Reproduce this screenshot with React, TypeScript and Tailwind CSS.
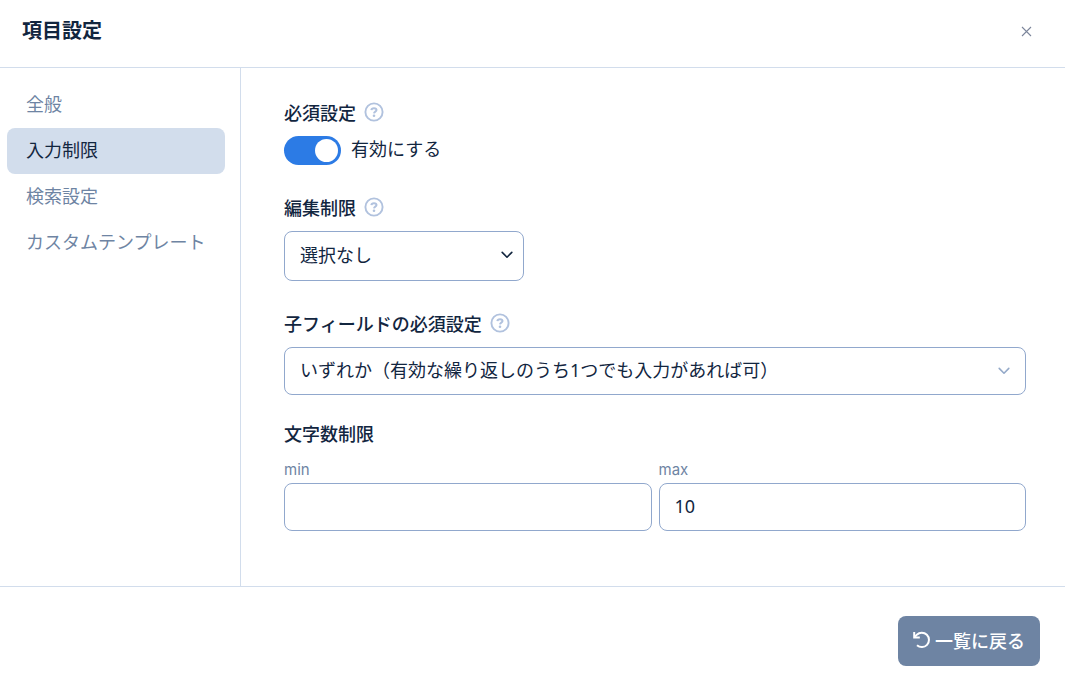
import React, { useState } from "react";

const NAV_ITEMS = ["全般", "入力制限", "検索設定", "カスタムテンプレート"];

const FIELD_CLASS =
    "w-full rounded-lg border border-[#91a8cd] bg-white px-[15px] pb-[2px] text-[18px] text-[#12263f] outline-none focus:border-[#2c7be5]";

function HelpIcon() {
    return (
        <svg className="size-5" viewBox="0 0 20 20" fill="none" stroke="currentColor" aria-hidden="true">
            <circle cx="10" cy="10" r="8.6" strokeWidth="1.9" />
            <path d="M7.4 8.1c.1-1.2 1.2-1.9 2.6-1.9s2.5.7 2.5 1.9c0 1.5-2.3 1.6-2.5 3.2" strokeWidth="2" />
            <circle cx="10" cy="13.7" r="1.3" fill="currentColor" stroke="none" />
        </svg>
    );
}

function HelpButton({ label }: { label: string }) {
    return (
        <button type="button" aria-label={label} className="mb-[2px] cursor-pointer text-[#b1c2de]">
            <HelpIcon />
        </button>
    );
}

function Chevron({ className }: { className: string }) {
    return (
        <svg
            className={`pointer-events-none col-start-1 row-start-1 self-center justify-self-end ${className}`}
            viewBox="0 0 12 8"
            fill="none"
            stroke="currentColor"
            strokeLinecap="round"
            strokeLinejoin="round"
            aria-hidden="true"
        >
            <path d="M1.2 1.4l4.8 4.8 4.8-4.8" strokeWidth="1.6" />
        </svg>
    );
}

function App() {
    /** selected settings tab */
    const [tab, setTab] = useState(NAV_ITEMS[1]);
    /** whether the field is required */
    const [required, setRequired] = useState(true);
    /** character limits */
    const [min, setMin] = useState("");
    const [max, setMax] = useState("10");

    return (
        <div className="flex min-h-screen flex-col bg-white font-['Noto_Sans','Noto_Sans_CJK_JP',sans-serif] text-[18px] text-[#12263f]">
            <header className="flex h-[68px] items-center justify-between border-b border-[#d2ddec] pr-[33px] pb-[6px] pl-[22px]">
                <h1 className="text-[20px] font-bold">項目設定</h1>
                <button type="button" aria-label="閉じる" className="cursor-pointer text-[#7c869b]">
                    <svg className="size-3" viewBox="0 0 12 12" fill="none" stroke="currentColor" aria-hidden="true">
                        <path d="M2 2l9 9M11 2l-9 9" strokeWidth="1.1" />
                    </svg>
                </button>
            </header>

            <div className="flex flex-1">
                <nav className="w-[241px] shrink-0 border-r border-[#d2ddec] py-[14px] pr-[15px] pl-[7px]">
                    {NAV_ITEMS.map((item) => (
                        <button
                            key={item}
                            type="button"
                            onClick={() => setTab(item)}
                            className={`block h-[46px] w-full cursor-pointer rounded-lg px-[19px] pb-[2px] text-left whitespace-nowrap ${
                                item === tab ? "bg-[#d2ddec]" : "text-[#6e84a3]"
                            }`}
                        >
                            {item}
                        </button>
                    ))}
                </nav>

                <main className="min-w-0 flex-1 pt-[30px] pr-[39px] pb-10 pl-[43px]">
                    <section>
                        <div className="flex h-[30px] items-center gap-2">
                            <h2 className="font-medium">必須設定</h2>
                            <HelpButton label="必須設定のヘルプ" />
                        </div>
                        <label className="mt-2 flex h-[29px] w-fit cursor-pointer items-center gap-[10px]">
                            <input
                                type="checkbox"
                                role="switch"
                                checked={required}
                                onChange={(e) => setRequired(e.target.checked)}
                                className="h-[29px] w-[57px] cursor-pointer appearance-none rounded-full bg-[#d2ddec] p-[3px] before:block before:size-[23px] before:rounded-full before:bg-white checked:bg-[#2c7be5] checked:before:ml-auto"
                            />
                            <span className="pb-[2px]">有効にする</span>
                        </label>
                    </section>

                    <section className="mt-7">
                        <div className="flex h-[30px] items-center gap-2">
                            <h2 className="font-medium">
                                <label htmlFor="edit-limit">編集制限</label>
                            </h2>
                            <HelpButton label="編集制限のヘルプ" />
                        </div>
                        <div className="mt-2 grid w-60">
                            <select id="edit-limit" className={`${FIELD_CLASS} col-start-1 row-start-1 h-[50px] appearance-none`}>
                                <option>選択なし</option>
                            </select>
                            <Chevron className="mr-[11px] mb-[2px] h-2 w-3" />
                        </div>
                    </section>

                    <section className="mt-7">
                        <div className="flex h-[30px] items-center gap-2">
                            <h2 className="font-medium">
                                <label htmlFor="child-required">子フィールドの必須設定</label>
                            </h2>
                            <HelpButton label="子フィールドの必須設定のヘルプ" />
                        </div>
                        <div className="mt-2 grid">
                            <select id="child-required" className={`${FIELD_CLASS} col-start-1 row-start-1 h-12 appearance-none`}>
                                <option>いずれか（有効な繰り返しのうち1つでも入力があれば可）</option>
                            </select>
                            <Chevron className="mr-4 h-2 w-3 text-[#95aac9]" />
                        </div>
                    </section>

                    <section className="mt-6">
                        <h2 className="flex h-[30px] items-center font-medium">文字数制限</h2>
                        <div className="mt-[7px] grid grid-cols-2 gap-[7px]">
                            <div>
                                <label htmlFor="min" className="block font-[Inter] text-[15px] leading-[27px] text-[#6e84a3]">
                                    min
                                </label>
                                <input
                                    id="min"
                                    type="text"
                                    value={min}
                                    onChange={(e) => setMin(e.target.value)}
                                    className={`${FIELD_CLASS} h-12`}
                                />
                            </div>
                            <div>
                                <label htmlFor="max" className="block font-[Inter] text-[15px] leading-[27px] text-[#6e84a3]">
                                    max
                                </label>
                                <input
                                    id="max"
                                    type="text"
                                    value={max}
                                    onChange={(e) => setMax(e.target.value)}
                                    className={`${FIELD_CLASS} h-12`}
                                />
                            </div>
                        </div>
                    </section>
                </main>
            </div>

            <footer className="flex justify-end border-t border-[#d2ddec] pt-[29px] pr-[25px] pb-[26px]">
                <button
                    type="button"
                    className="flex h-[50px] cursor-pointer items-center gap-[2px] rounded-lg bg-[#6e84a3] px-[15px] font-medium text-white"
                >
                    <svg className="size-5" viewBox="0 0 20 20" fill="none" stroke="currentColor" strokeWidth="2" aria-hidden="true">
                        <path d="M1.2 1v5.4h5.6" />
                        <path d="M1.6 6.2l2.2-2.5a7.2 7.2 0 1 1 .2 10.6" />
                    </svg>
                    一覧に戻る
                </button>
            </footer>
        </div>
    );
}

export default App;
